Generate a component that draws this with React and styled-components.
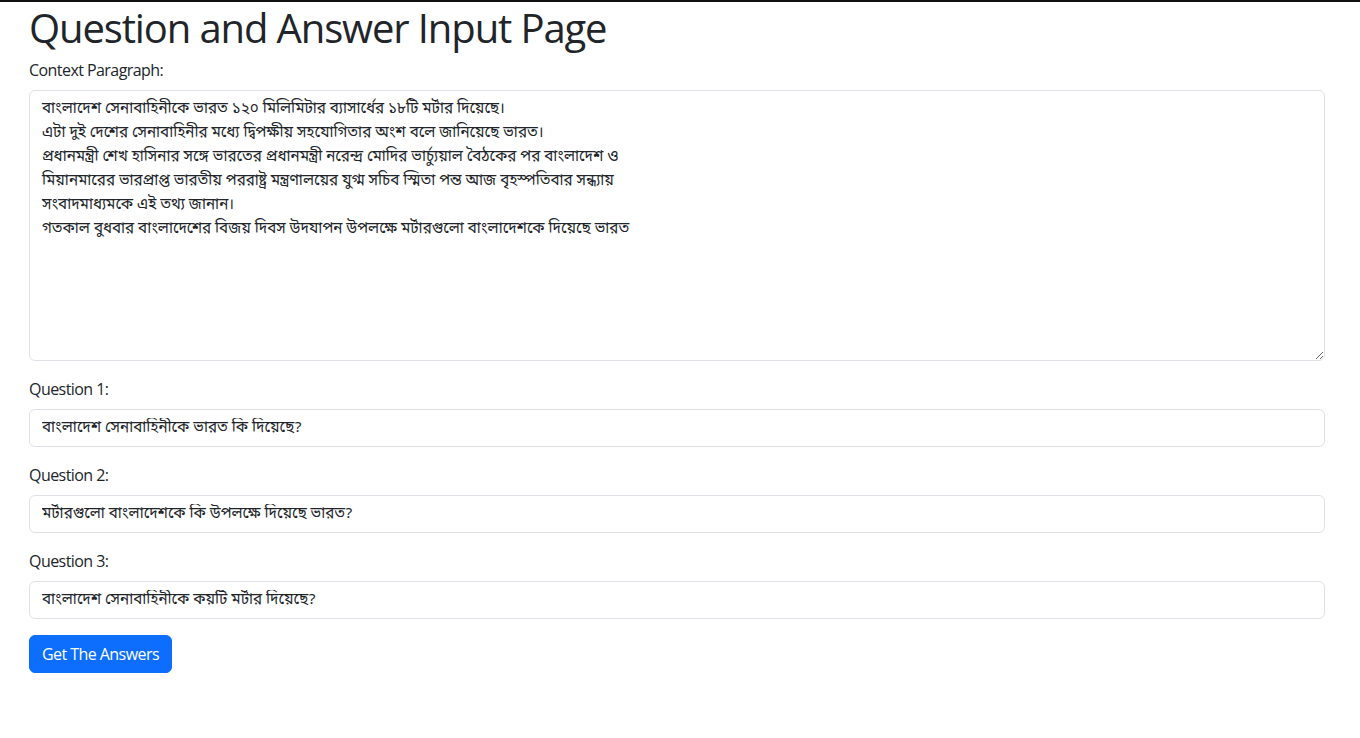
import React, { useState } from "react";
import styled, { createGlobalStyle } from "styled-components";

const GlobalStyle = createGlobalStyle`
  html, body {
    margin: 0;
    padding: 0;
    background: #fff;
  }
  body {
    border-top: 2px solid #111;
    font-family: "Segoe UI", "Open Sans", "Noto Sans", sans-serif;
    font-size: 16px;
    line-height: 1.5;
    color: #212529;
  }
  * {
    box-sizing: border-box;
  }
`;

const Page = styled.div`
  padding: 0 35px 0 29px;
`;

const Title = styled.h1`
  margin: 2px 0 6px;
  font-size: 40px;
  font-weight: 400;
  line-height: 1.2;
  letter-spacing: -0.028em;
`;

const Field = styled.div`
  margin-bottom: 16px;
`;

const Label = styled.label`
  display: block;
  margin-bottom: 8px;
  letter-spacing: -0.035em;
`;

const bengali = `"Vrinda", "Noto Sans Bengali", "Lohit Bengali", "FreeSerif", "Open Sans", sans-serif`;

const TextArea = styled.textarea`
  display: block;
  width: 100%;
  height: 271px;
  padding: 6px 12px;
  font-family: ${bengali};
  font-size: 15.2px;
  line-height: 24px;
  color: #212529;
  border: 1px solid #dee2e6;
  border-radius: 6px;
  resize: vertical;
  outline: none;
`;

const Input = styled.input`
  display: block;
  width: 100%;
  height: 38px;
  padding: 6px 12px;
  font-family: ${bengali};
  font-size: 15.2px;
  line-height: 24px;
  color: #212529;
  border: 1px solid #dee2e6;
  border-radius: 6px;
  outline: none;
`;

const Button = styled.button`
  height: 38px;
  padding: 6px 12px;
  font-family: inherit;
  font-size: 16px;
  line-height: 1.5;
  letter-spacing: -0.035em;
  color: #fff;
  background: #0d6efd;
  border: 1px solid #0d6efd;
  border-radius: 6px;
  cursor: pointer;
`;

const context = `বাংলাদেশ সেনাবাহিনীকে ভারত ১২০ মিলিমিটার ব্যাসার্ধের ১৮টি মর্টার দিয়েছে।
এটা দুই দেশের সেনাবাহিনীর মধ্যে দ্বিপক্ষীয় সহযোগিতার অংশ বলে জানিয়েছে ভারত।
প্রধানমন্ত্রী শেখ হাসিনার সঙ্গে ভারতের প্রধানমন্ত্রী নরেন্দ্র মোদির ভার্চ্যুয়াল বৈঠকের পর বাংলাদেশ ও
মিয়ানমারের ভারপ্রাপ্ত ভারতীয় পররাষ্ট্র মন্ত্রণালয়ের যুগ্ম সচিব স্মিতা পন্ত আজ বৃহস্পতিবার সন্ধ্যায়
সংবাদমাধ্যমকে এই তথ্য জানান।
গতকাল বুধবার বাংলাদেশের বিজয় দিবস উদযাপন উপলক্ষে মর্টারগুলো বাংলাদেশকে দিয়েছে ভারত`;

const questions = [
  "বাংলাদেশ সেনাবাহিনীকে ভারত কি দিয়েছে?",
  "মর্টারগুলো বাংলাদেশকে কি উপলক্ষে দিয়েছে ভারত?",
  "বাংলাদেশ সেনাবাহিনীকে কয়টি মর্টার দিয়েছে?",
];

export default function App() {
  const [text, setText] = useState(context);
  const [qs, setQs] = useState(questions);

  return (
    <>
      <GlobalStyle />
      <Page>
        <Title>Question and Answer Input Page</Title>
        <Field>
          <Label htmlFor="context">Context Paragraph:</Label>
          <TextArea id="context" value={text} onChange={e => setText(e.target.value)} />
        </Field>
        {qs.map((q, i) => (
          <Field key={i}>
            <Label htmlFor={"q" + i}>Question {i + 1}:</Label>
            <Input
              id={"q" + i}
              type="text"
              value={q}
              onChange={e => setQs(qs.map((v, j) => (j === i ? e.target.value : v)))}
            />
          </Field>
        ))}
        <Button type="button">Get The Answers</Button>
      </Page>
    </>
  );
}
